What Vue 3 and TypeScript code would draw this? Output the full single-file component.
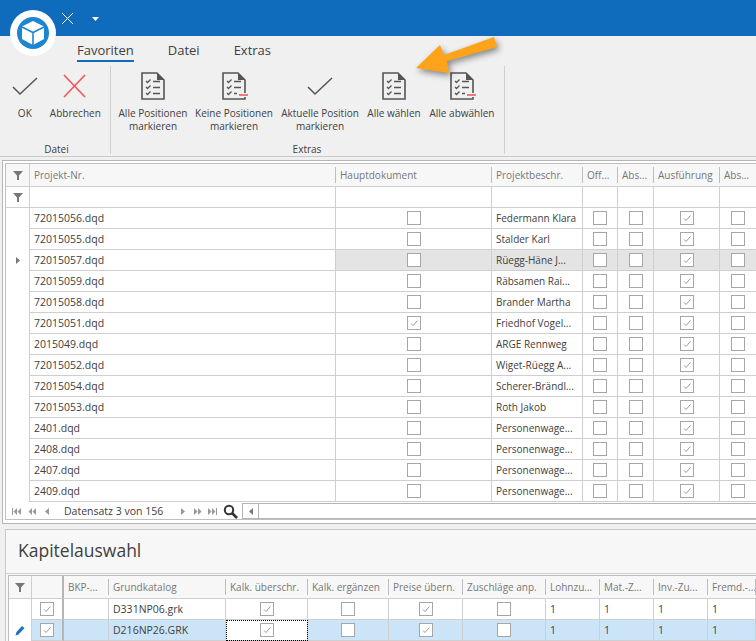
<script setup lang="ts">
type RibbonIcon = "check" | "cross" | "doc" | "docminus";

interface RibbonButton {
  lines: string[];
  icon: RibbonIcon;
  width: number;
}

const dateiButtons: RibbonButton[] = [
  { lines: ["OK"], icon: "check", width: 38 },
  { lines: ["Abbrechen"], icon: "cross", width: 64 },
];

const extrasButtons: RibbonButton[] = [
  { lines: ["Alle Positionen", "markieren"], icon: "doc", width: 82 },
  { lines: ["Keine Positionen", "markieren"], icon: "docminus", width: 80 },
  { lines: ["Aktuelle Position", "markieren"], icon: "check", width: 92 },
  { lines: ["Alle wählen"], icon: "doc", width: 56 },
  { lines: ["Alle abwählen"], icon: "docminus", width: 80 },
];

const projectHeaders = ["Projekt-Nr.", "Hauptdokument", "Projektbeschr.", "Off...", "Abs...", "Ausführung", "Abs..."];

const projects = [
  { nr: "72015056.dqd", main: false, name: "Federmann Klara" },
  { nr: "72015055.dqd", main: false, name: "Stalder Karl" },
  { nr: "72015057.dqd", main: false, name: "Rüegg-Häne J..." },
  { nr: "72015059.dqd", main: false, name: "Räbsamen Rai..." },
  { nr: "72015058.dqd", main: false, name: "Brander Martha" },
  { nr: "72015051.dqd", main: true, name: "Friedhof Vogel..." },
  { nr: "2015049.dqd", main: false, name: "ARGE Rennweg" },
  { nr: "72015052.dqd", main: false, name: "Wiget-Rüegg A..." },
  { nr: "72015054.dqd", main: false, name: "Scherer-Brändl..." },
  { nr: "72015053.dqd", main: false, name: "Roth Jakob" },
  { nr: "2401.dqd", main: false, name: "Personenwage..." },
  { nr: "2408.dqd", main: false, name: "Personenwage..." },
  { nr: "2407.dqd", main: false, name: "Personenwage..." },
  { nr: "2409.dqd", main: false, name: "Personenwage..." },
];

const chapterHeaders = [
  "BKP-...", "Grundkatalog", "Kalk. überschr.", "Kalk. ergänzen", "Preise übern.",
  "Zuschläge anp.", "Lohnzu...", "Mat.-Z...", "Inv.-Zu...", "Fremd.-...",
];

const chapters = ["D331NP06.grk", "D216NP26.GRK"];
</script>

<template>
  <div class="window">
    <header class="titlebar">
      <svg class="title-close" width="13" height="13" viewBox="0 0 13 13">
        <path d="M1 1 L12 12 M12 1 L1 12" stroke="#fff" stroke-width="1" fill="none" />
      </svg>
      <svg class="title-drop" width="7" height="4" viewBox="0 0 7 4">
        <path d="M0 0 H7 L3.5 4 Z" fill="#fff" />
      </svg>
    </header>

    <section class="ribbon">
      <nav class="tabs">
        <span class="tab tab--active">Favoriten</span>
        <span class="tab">Datei</span>
        <span class="tab">Extras</span>
      </nav>
      <div class="groups">
        <div class="group group--datei">
          <div class="group-buttons">
            <div v-for="b in dateiButtons" :key="b.lines[0]" class="rb" :style="{ width: b.width + 'px' }">
              <svg class="rb-icon" width="28" height="30" viewBox="0 0 28 30">
                <path v-if="b.icon === 'check'" d="M2 16 L9 23 L26 7" stroke="#555" stroke-width="1.5" fill="none" />
                <path v-else d="M3 4 L24 26 M24 4 L3 26" stroke="#ee5a5f" stroke-width="1.7" fill="none" />
              </svg>
              <span v-for="l in b.lines" :key="l" class="rb-line">{{ l }}</span>
            </div>
          </div>
          <span class="group-label">Datei</span>
        </div>
        <div class="group group--extras">
          <div class="group-buttons">
            <div v-for="b in extrasButtons" :key="b.lines[0]" class="rb" :style="{ width: b.width + 'px' }">
              <svg v-if="b.icon === 'check'" class="rb-icon" width="28" height="30" viewBox="0 0 28 30">
                <path d="M2 16 L9 23 L26 7" stroke="#555" stroke-width="1.5" fill="none" />
              </svg>
              <svg v-else class="rb-icon" width="28" height="30" viewBox="0 0 28 30">
                <path
                  :d="b.icon === 'doc'
                    ? 'M3 2 H18 L25 9 V28 H3 Z'
                    : 'M25 22 V9 L18 2 H3 V28 H25 V26'"
                  stroke="#555" stroke-width="1.6" fill="none"
                />
                <path d="M18 2 V9 H25 Z" fill="#555" />
                <path d="M7 10 L8.5 11.5 L11.5 8.5 M7 16 L8.5 17.5 L11.5 14.5 M7 22 L8.5 23.5 L11.5 20.5" stroke="#555" stroke-width="1.3" fill="none" />
                <path d="M14 10.5 H21 M14 16.5 H21" stroke="#555" stroke-width="1.5" fill="none" />
                <path v-if="b.icon === 'doc'" d="M14 22.5 H21" stroke="#555" stroke-width="1.5" fill="none" />
                <template v-else>
                  <path d="M14 22.5 H17" stroke="#555" stroke-width="1.5" fill="none" />
                  <path d="M19 24 H28" stroke="#ee5a5f" stroke-width="1.6" fill="none" />
                </template>
              </svg>
              <span v-for="l in b.lines" :key="l" class="rb-line">{{ l }}</span>
            </div>
          </div>
          <span class="group-label">Extras</span>
        </div>
      </div>
    </section>

    <section class="frame">
      <div class="frame-inner">
        <div class="row row--p row--head">
          <span class="cell cell--ind"><svg class="funnel" width="10" height="10" viewBox="0 0 10 10"><path d="M0 1 H10 L6 5.5 V10 L4 10 V5.5 Z" fill="#777" /></svg></span>
          <span v-for="h in projectHeaders" :key="h" class="cell cell--head">{{ h }}</span>
        </div>
        <div class="row row--p row--filter">
          <span class="cell cell--ind"><svg class="funnel" width="10" height="10" viewBox="0 0 10 10"><path d="M0 1 H10 L6 5.5 V10 L4 10 V5.5 Z" fill="#777" /></svg></span>
          <span v-for="h in projectHeaders" :key="h" class="cell"></span>
        </div>
        <div v-for="(p, i) in projects" :key="p.nr" class="row row--p row--data" :class="{ 'row--current': i === 2 }">
          <span class="cell cell--ind cell--plain">
            <svg v-if="i === 2" width="4" height="7" viewBox="0 0 4 7"><path d="M0 0 L4 3.5 L0 7 Z" fill="#777" /></svg>
          </span>
          <span class="cell cell--text cell--focus">{{ p.nr }}</span>
          <span class="cell cell--box"><span class="cb"><svg v-if="p.main" width="12" height="12" viewBox="0 0 12 12"><path d="M3 6.5 L5 8.5 L9.5 3.5" stroke="#999" stroke-width="1" fill="none" /></svg></span></span>
          <span class="cell cell--text cell--name">{{ p.name }}</span>
          <span class="cell cell--box"><span class="cb"></span></span>
          <span class="cell cell--box"><span class="cb"></span></span>
          <span class="cell cell--box"><span class="cb"><svg width="12" height="12" viewBox="0 0 12 12"><path d="M3 6.5 L5 8.5 L9.5 3.5" stroke="#999" stroke-width="1" fill="none" /></svg></span></span>
          <span class="cell cell--box"><span class="cb"></span></span>
        </div>
        <div class="navbar">
          <div class="nav-buttons">
            <svg width="9" height="7" viewBox="0 0 9 7" class="nb1"><path d="M0 0 H1 V7 H0 Z M5 0 V7 L1.5 3.5 Z M9 0 V7 L5.5 3.5 Z" fill="#999" /></svg>
            <svg width="8" height="7" viewBox="0 0 8 7" class="nb2"><path d="M4 0 V7 L0.5 3.5 Z M8 0 V7 L4.5 3.5 Z" fill="#999" /></svg>
            <svg width="4" height="7" viewBox="0 0 4 7" class="nb3"><path d="M4 0 V7 L0 3.5 Z" fill="#999" /></svg>
          </div>
          <span class="nav-text">Datensatz 3 von 156</span>
          <div class="nav-buttons nav-buttons--next">
            <svg width="4" height="7" viewBox="0 0 4 7"><path d="M0 0 V7 L4 3.5 Z" fill="#999" /></svg>
            <svg width="8" height="7" viewBox="0 0 8 7" class="nb5"><path d="M0 0 V7 L3.5 3.5 Z M4 0 V7 L7.5 3.5 Z" fill="#999" /></svg>
            <svg width="9" height="7" viewBox="0 0 9 7" class="nb6"><path d="M0 0 V7 L3.5 3.5 Z M4 0 V7 L7.5 3.5 Z M8 0 H9 V7 H8 Z" fill="#999" /></svg>
          </div>
          <svg class="nav-search" width="15" height="15" viewBox="0 0 15 15">
            <circle cx="6" cy="6" r="4.2" stroke="#333" stroke-width="2" fill="none" />
            <path d="M9 9 L14 14" stroke="#333" stroke-width="2.6" />
          </svg>
          <div class="scrollbar">
            <span class="scroll-btn"><svg width="4" height="7" viewBox="0 0 4 7"><path d="M4 0 V7 L0 3.5 Z" fill="#777" /></svg></span>
          </div>
        </div>
      </div>
    </section>

    <section class="chapter">
      <h2 class="chapter-title">Kapitelauswahl</h2>
      <div class="chapter-grid">
        <div class="row row--c row--chead">
          <span class="cell cell--ind"><svg class="funnel" width="10" height="10" viewBox="0 0 10 10"><path d="M0 1 H10 L6 5.5 V10 L4 10 V5.5 Z" fill="#777" /></svg></span>
          <span class="cell cell--fixed"></span>
          <span v-for="h in chapterHeaders" :key="h" class="cell cell--head">{{ h }}</span>
        </div>
        <div v-for="(c, i) in chapters" :key="c" class="row row--c row--data" :class="{ 'row--selected': i === 1 }">
          <span class="cell cell--ind cell--plain">
            <svg v-if="i === 1" width="10" height="11" viewBox="0 0 10 11"><path d="M0.5 10.5 L1.5 7 L7 1 L9.5 3 L3.5 9.5 Z" fill="#1f6fc5" /></svg>
          </span>
          <span class="cell cell--box cell--fixed"><span class="cb"><svg width="12" height="12" viewBox="0 0 12 12"><path d="M3 6.5 L5 8.5 L9.5 3.5" stroke="#999" stroke-width="1" fill="none" /></svg></span></span>
          <span class="cell"></span>
          <span class="cell cell--text">{{ c }}</span>
          <span class="cell cell--box" :class="{ 'cell--dotted': i === 1 }"><span class="cb"><svg width="12" height="12" viewBox="0 0 12 12"><path d="M3 6.5 L5 8.5 L9.5 3.5" stroke="#999" stroke-width="1" fill="none" /></svg></span></span>
          <span class="cell cell--box"><span class="cb"></span></span>
          <span class="cell cell--box"><span class="cb"><svg width="12" height="12" viewBox="0 0 12 12"><path d="M3 6.5 L5 8.5 L9.5 3.5" stroke="#999" stroke-width="1" fill="none" /></svg></span></span>
          <span class="cell cell--box"><span class="cb"></span></span>
          <span class="cell cell--text">1</span>
          <span class="cell cell--text">1</span>
          <span class="cell cell--text">1</span>
          <span class="cell cell--text">1</span>
        </div>
      </div>
    </section>

    <!-- App logo sits over the title bar and ribbon -->
    <div class="logo">
      <svg width="46" height="46" viewBox="0 0 46 46">
        <circle cx="23" cy="23" r="23" fill="#fff" />
        <circle cx="23" cy="23" r="16" fill="#1c86d1" />
        <path d="M23 11 L34 16.5 V29 L23 35 L12 29 V16.5 Z" fill="#fff" />
        <path d="M12 17 L23 22.5 L34 17 M23 22.5 V35" stroke="#1c86d1" stroke-width="1.6" fill="none" />
      </svg>
    </div>

    <!-- Annotation arrow -->
    <svg class="arrow" width="756" height="160" viewBox="0 0 756 160">
      <polygon points="416,68 440,45 444,55 494,37 497,47 447,61 449,73" fill="#ffa31a" />
    </svg>
  </div>
</template>

<style scoped>
.window {
  position: relative;
  width: 756px;
  height: 641px;
  overflow: hidden;
  background: #f0f0f0;
  font-family: "Open Sans", "Noto Sans", sans-serif;
  font-size: 10.5px;
  color: #404040;
}

.titlebar {
  height: 36px;
  background: #0f6cbd;
  display: flex;
  align-items: flex-start;
}

.title-close {
  margin: 12px 0 0 61px;
}

.title-drop {
  margin: 17px 0 0 18px;
}

.ribbon {
  height: 121px;
  box-sizing: border-box;
  border-bottom: 1px solid #c9c9c9;
}

.tabs {
  height: 26px;
  display: flex;
  padding-left: 77px;
  gap: 34px;
  font-size: 13px;
}

.tab {
  height: 26px;
  box-sizing: border-box;
  padding-top: 5px;
  color: #404040;
}

.tab--active {
  border-bottom: 2px solid #0f6cbd;
}

.groups {
  display: flex;
  height: 88px;
  margin-top: 4px;
  font-size: 10px;
}

.group {
  display: flex;
  flex-direction: column;
  align-items: center;
  border-right: 1px solid #cfcfcf;
  box-sizing: border-box;
  padding-top: 4px;
}

.group--datei {
  width: 111px;
  padding-left: 6px;
  padding-right: 3px;
}

.group--extras {
  width: 394px;
  padding-left: 1px;
  padding-right: 2px;
}

.group-buttons {
  display: flex;
  flex: 1;
  width: 100%;
}

.group-label {
  height: 12px;
  line-height: 14px;
}

.rb {
  display: flex;
  flex-direction: column;
  align-items: center;
  white-space: nowrap;
}

.rb-icon {
  margin-top: 1px;
  margin-bottom: 6px;
  flex-shrink: 0;
}

.rb-line {
  line-height: 13px;
}

.frame {
  margin: 3px 0 0 2px;
  height: 364px;
  box-sizing: border-box;
  border: 1px solid #b5b5b5;
  border-right: 0;
  padding: 2px 0 0 2px;
  background: #fff;
}

.frame-inner {
  height: 355px;
  border: 1px solid #c0c0c0;
  border-right: 0;
  background: #fff;
}

.row {
  display: grid;
}

.row--p {
  grid-template-columns: 24px 306px 156px 91px 35px 36px 66px 37px;
}

.row--c {
  grid-template-columns: 23px 32px 45px 117px 82px 81px 74px 83px 54px 54px 54px 48px;
}

.cell {
  box-sizing: border-box;
  border-right: 1px solid #cfcfcf;
  border-bottom: 1px solid #cfcfcf;
  display: flex;
  align-items: center;
  min-width: 0;
  white-space: nowrap;
  overflow: hidden;
}

.cell--ind {
  justify-content: center;
  background: #fff;
}

.cell--plain {
  border-bottom: 0;
}

.cell--head {
  padding-left: 4px;
  font-size: 10px;
  color: #777;
  position: relative;
  border-right: 0;
}

.cell--head::after {
  content: "";
  position: absolute;
  right: 0;
  top: 3px;
  bottom: 3px;
  width: 1px;
  background: #bdbdbd;
}

.cell--text {
  padding-left: 4px;
  color: #404040;
}

.cell--name {
  font-size: 10px;
}

.cell--box {
  justify-content: center;
}

.funnel {
  display: block;
}

.row--head {
  height: 23px;
  background: #f7f7f7;
}

.row--head .cell {
  background: #f7f7f7;
}

.row--filter {
  height: 21px;
}

.row--data {
  height: 21px;
}

.row--current .cell:not(.cell--ind):not(.cell--focus) {
  background: #e4e4e4;
}

.row--selected .cell:not(.cell--ind):not(.cell--dotted) {
  background: #cce4f7;
}

.cell--dotted {
  outline: 1px dotted #000;
  outline-offset: -1px;
  background: #fff;
}

.cb {
  width: 14px;
  height: 14px;
  box-sizing: border-box;
  border: 1px solid #a6a6a6;
  background: #fff;
  display: block;
}

.cb svg {
  display: block;
}

.navbar {
  height: 16px;
  margin-top: 1px;
  display: flex;
  align-items: center;
  background: #fff;
}

.nav-buttons {
  width: 56px;
  padding-left: 6px;
  display: flex;
  align-items: center;
  box-sizing: border-box;
}

.nb2 {
  margin-left: 7px;
}

.nb3 {
  margin-left: 9px;
}

.nav-text {
  width: 119px;
  padding-left: 2px;
  box-sizing: border-box;
  color: #404040;
}

.nav-buttons--next {
  width: 38px;
  padding-left: 0;
}

.nb5 {
  margin-left: 9px;
}

.nb6 {
  margin-left: 6px;
}

.nav-search {
  margin-left: 4px;
  flex-shrink: 0;
}

.scrollbar {
  flex: 1;
  margin-left: 4px;
  height: 16px;
  box-sizing: border-box;
  border-top: 1px solid #b5b5b5;
  border-bottom: 1px solid #b5b5b5;
  border-left: 1px solid #b5b5b5;
}

.scroll-btn {
  width: 15px;
  height: 14px;
  border-right: 1px solid #b5b5b5;
  display: flex;
  align-items: center;
  justify-content: center;
}

.chapter {
  margin: 5px 0 0 5px;
  height: 112px;
  border-left: 1px solid #c9c9c9;
  border-top: 1px solid #c9c9c9;
  background: #f7f7f7;
}

.chapter-title {
  margin: 0;
  height: 44px;
  box-sizing: border-box;
  padding: 8px 0 0 12px;
  font-size: 17.5px;
  font-weight: 400;
  line-height: 24px;
  color: #404040;
  border-bottom: 1px solid #cfcfcf;
}

.chapter-grid {
  margin: 1px 0 0 2px;
  background: #fff;
  border-top: 1px solid #bdbdbd;
  border-left: 1px solid #bdbdbd;
}

.row--chead {
  height: 23px;
}

.row--chead .cell {
  background: #f7f7f7;
}

.cell--fixed {
  border-right: 2px solid #b5b5b5;
}

.logo {
  position: absolute;
  left: 10px;
  top: 10px;
  width: 46px;
  height: 46px;
}

.logo svg {
  display: block;
}

.arrow {
  position: absolute;
  left: 0;
  top: 0;
  filter: drop-shadow(2px 3px 3px rgba(0, 0, 0, 0.45));
  pointer-events: none;
}
</style>

<style>
html,
body {
  margin: 0;
  overflow: hidden;
}
</style>
